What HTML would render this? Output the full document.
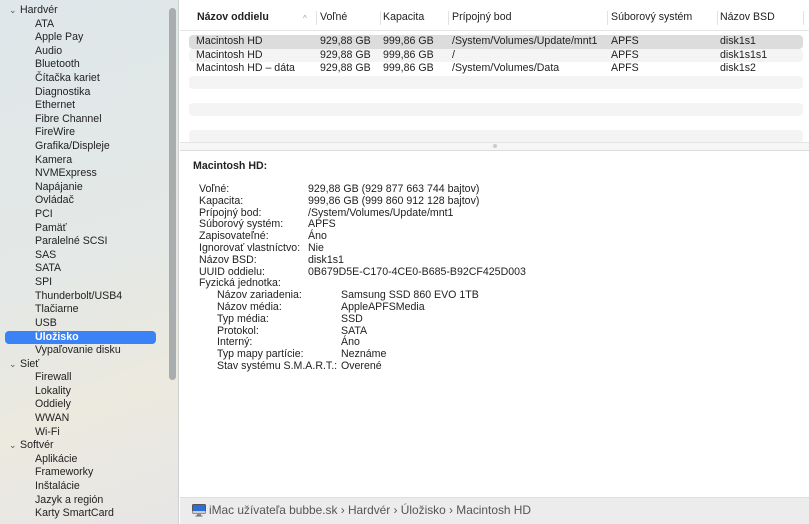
<!DOCTYPE html>
<html><head><meta charset="utf-8"><style>
*{margin:0;padding:0;box-sizing:border-box}
body{width:809px;height:524px;overflow:hidden;font-family:"Liberation Sans",sans-serif;font-size:10.6px;color:#222;position:relative;background:#fff}
#sb{position:absolute;left:0;top:0;width:179px;height:524px;background:linear-gradient(160deg,#dfe7ea 0%,#e4e8e6 50%,#ece9df 75%,#e6e6e6 100%);border-right:1px solid #d0d0d0}
.s{position:absolute;white-space:nowrap;line-height:13px}
.h{left:20px}
.i{left:35px}
.chev{position:absolute;left:9px;font-size:9px;color:#555}
#sel{position:absolute;left:5px;top:331px;width:151px;height:13px;background:#3a82f6;border-radius:4px}
#scroll{position:absolute;left:169px;top:8px;width:7px;height:372px;background:#a9adae;border-radius:4px}
.t{position:absolute;white-space:nowrap;line-height:13px}
.row{position:absolute;left:189px;width:614px;height:13.5px;border-radius:4px}
.sep{position:absolute;top:11px;width:1px;height:14px;background:#e2e2e2}
</style></head><body>
<div id="sb">
<div id="sel"></div>
<div id="scroll"></div>
</div>
<div class="chev" style="top:5px">⌄</div><div class="s h" style="top:4px">Hardvér</div>
<div class="s i" style="top:17.6px">ATA</div>
<div class="s i" style="top:31.2px">Apple Pay</div>
<div class="s i" style="top:44.8px">Audio</div>
<div class="s i" style="top:58.4px">Bluetooth</div>
<div class="s i" style="top:72px">Čítačka kariet</div>
<div class="s i" style="top:85.6px">Diagnostika</div>
<div class="s i" style="top:99.2px">Ethernet</div>
<div class="s i" style="top:112.8px">Fibre Channel</div>
<div class="s i" style="top:126.4px">FireWire</div>
<div class="s i" style="top:140px">Grafika/Displeje</div>
<div class="s i" style="top:153.6px">Kamera</div>
<div class="s i" style="top:167.2px">NVMExpress</div>
<div class="s i" style="top:180.8px">Napájanie</div>
<div class="s i" style="top:194.4px">Ovládač</div>
<div class="s i" style="top:208px">PCI</div>
<div class="s i" style="top:221.6px">Pamäť</div>
<div class="s i" style="top:235.2px">Paralelné SCSI</div>
<div class="s i" style="top:248.8px">SAS</div>
<div class="s i" style="top:262.4px">SATA</div>
<div class="s i" style="top:276px">SPI</div>
<div class="s i" style="top:289.6px">Thunderbolt/USB4</div>
<div class="s i" style="top:303.2px">Tlačiarne</div>
<div class="s i" style="top:316.8px">USB</div>
<div class="s i" style="top:331.4px;color:#fff;font-weight:bold">Úložisko</div>
<div class="s i" style="top:344px">Vypaľovanie disku</div>
<div class="chev" style="top:358.6px">⌄</div><div class="s h" style="top:357.6px">Sieť</div>
<div class="s i" style="top:371.2px">Firewall</div>
<div class="s i" style="top:384.8px">Lokality</div>
<div class="s i" style="top:398.4px">Oddiely</div>
<div class="s i" style="top:412px">WWAN</div>
<div class="s i" style="top:425.6px">Wi-Fi</div>
<div class="chev" style="top:440.2px">⌄</div><div class="s h" style="top:439.2px">Softvér</div>
<div class="s i" style="top:452.8px">Aplikácie</div>
<div class="s i" style="top:466.4px">Frameworky</div>
<div class="s i" style="top:480px">Inštalácie</div>
<div class="s i" style="top:493.6px">Jazyk a región</div>
<div class="s i" style="top:507.2px">Karty SmartCard</div>

<div style="position:absolute;left:180px;top:30px;width:629px;height:1px;background:#e6e6e6"></div>
<div class="t" style="left:197px;top:11px;font-weight:bold">Názov oddielu</div>
<div class="t" style="left:303px;top:12px;color:#999;font-size:8px">^</div>
<div class="sep" style="left:316px"></div><div class="sep" style="left:380px"></div><div class="sep" style="left:448px"></div><div class="sep" style="left:607px"></div><div class="sep" style="left:717px"></div><div class="sep" style="left:803px"></div>
<div class="t" style="left:320px;top:11px">Voľné</div>
<div class="t" style="left:383px;top:11px">Kapacita</div>
<div class="t" style="left:452px;top:11px">Prípojný bod</div>
<div class="t" style="left:611px;top:11px">Súborový systém</div>
<div class="t" style="left:720px;top:11px">Názov BSD</div>
<div class="row" style="top:35px;background:#dcdcdc"></div>
<div class="row" style="top:48.5px;background:#f4f4f5"></div>
<div class="row" style="top:75.5px;background:#f4f4f5"></div>
<div class="row" style="top:102.5px;background:#f4f4f5"></div>
<div class="row" style="top:129.5px;background:#f4f4f5"></div>
<div class="t" style="left:196px;top:35px">Macintosh HD</div><div class="t" style="left:320px;top:35px">929,88 GB</div><div class="t" style="left:383px;top:35px">999,86 GB</div><div class="t" style="left:452px;top:35px">/System/Volumes/Update/mnt1</div><div class="t" style="left:611px;top:35px">APFS</div><div class="t" style="left:720px;top:35px">disk1s1</div>
<div class="t" style="left:196px;top:48.5px">Macintosh HD</div><div class="t" style="left:320px;top:48.5px">929,88 GB</div><div class="t" style="left:383px;top:48.5px">999,86 GB</div><div class="t" style="left:452px;top:48.5px">/</div><div class="t" style="left:611px;top:48.5px">APFS</div><div class="t" style="left:720px;top:48.5px">disk1s1s1</div>
<div class="t" style="left:196px;top:62px">Macintosh HD – dáta</div><div class="t" style="left:320px;top:62px">929,88 GB</div><div class="t" style="left:383px;top:62px">999,86 GB</div><div class="t" style="left:452px;top:62px">/System/Volumes/Data</div><div class="t" style="left:611px;top:62px">APFS</div><div class="t" style="left:720px;top:62px">disk1s2</div>
<div style="position:absolute;left:180px;top:142px;width:629px;height:9px;background:#f6f6f6;border-top:1px solid #e4e4e4;border-bottom:1px solid #dcdcdc"></div>
<div style="position:absolute;left:493px;top:144px;width:4px;height:4px;border-radius:2px;background:#ccc"></div>

<div class="t" style="left:193px;top:160px;font-weight:bold">Macintosh HD:</div>
<div style="position:absolute;left:199px;top:184px;line-height:11.8px;white-space:nowrap">Voľné:<br>Kapacita:<br>Prípojný bod:<br>Súborový systém:<br>Zapisovateľné:<br>Ignorovať vlastníctvo:<br>Názov BSD:<br>UUID oddielu:<br>Fyzická jednotka:</div>
<div style="position:absolute;left:308px;top:184px;line-height:11.8px;white-space:nowrap">929,88 GB (929 877 663 744 bajtov)<br>999,86 GB (999 860 912 128 bajtov)<br>/System/Volumes/Update/mnt1<br>APFS<br>Áno<br>Nie<br>disk1s1<br>0B679D5E-C170-4CE0-B685-B92CF425D003</div>
<div style="position:absolute;left:217px;top:290.2px;line-height:11.8px;white-space:nowrap">Názov zariadenia:<br>Názov média:<br>Typ média:<br>Protokol:<br>Interný:<br>Typ mapy partície:<br>Stav systému S.M.A.R.T.:</div>
<div style="position:absolute;left:341px;top:290.2px;line-height:11.8px;white-space:nowrap">Samsung SSD 860 EVO 1TB<br>AppleAPFSMedia<br>SSD<br>SATA<br>Áno<br>Neznáme<br>Overené</div>

<div style="position:absolute;left:180px;top:497px;width:629px;height:27px;background:#ececec;border-top:1px solid #dedede"></div>
<svg style="position:absolute;left:192px;top:504px" width="14" height="13" viewBox="0 0 14 13"><rect x="0.5" y="0.5" width="13" height="9" rx="1" fill="#2d6fd6" stroke="#555"/><rect x="0.5" y="7" width="13" height="2.5" fill="#ccc"/><rect x="5" y="10" width="4" height="2" fill="#888"/><rect x="3.5" y="11.5" width="7" height="1" fill="#666"/></svg>
<div class="t" style="left:209px;top:504px;color:#555;font-size:11.9px">iMac užívateľa bubbe.sk › Hardvér › Úložisko › Macintosh HD</div>
</body></html>
